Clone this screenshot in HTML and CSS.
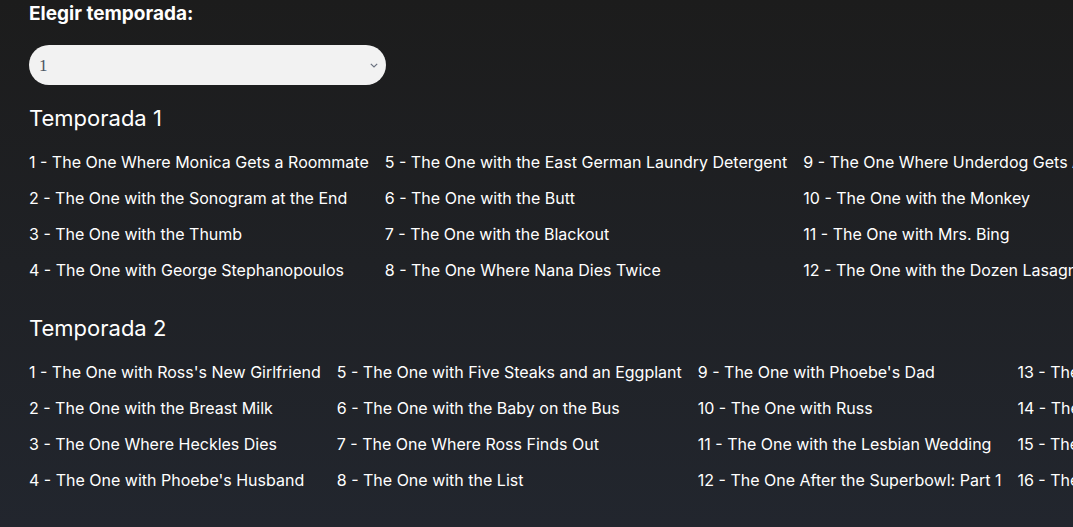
FILE: index.html
```html
<!DOCTYPE html>
<html lang="es">
<head>
<meta charset="utf-8">
<title>Temporadas</title>
<link rel="stylesheet" href="styles.css">
</head>
<body>
<main class="page">
  <label class="picker-label" for="season">Elegir temporada:</label>
  <div class="picker">
    <select id="season" class="picker-select">
      <option>1</option>
      <option>2</option>
    </select>
    <svg class="picker-chevron" width="8" height="5" viewBox="0 0 8 5"><path d="M0.8 0.8 L4 4 L7.2 0.8" fill="none" stroke="#6b7280" stroke-width="1.2"/></svg>
  </div>

  <section class="season">
    <h2 class="season-title">Temporada 1</h2>
    <ul class="episodes">
      <li>1 - The One Where Monica Gets a Roommate</li>
      <li>2 - The One with the Sonogram at the End</li>
      <li>3 - The One with the Thumb</li>
      <li>4 - The One with George Stephanopoulos</li>
      <li>5 - The One with the East German Laundry Detergent</li>
      <li>6 - The One with the Butt</li>
      <li>7 - The One with the Blackout</li>
      <li>8 - The One Where Nana Dies Twice</li>
      <li>9 - The One Where Underdog Gets Away</li>
      <li>10 - The One with the Monkey</li>
      <li>11 - The One with Mrs. Bing</li>
      <li>12 - The One with the Dozen Lasagnas</li>
      <li>13 - The One with the Boobies</li>
      <li>14 - The One with the Candy Hearts</li>
      <li>15 - The One with the Stoned Guy</li>
      <li>16 - The One with Two Parts: Part 1</li>
      <li>17 - The One with Two Parts: Part 2</li>
      <li>18 - The One with All the Poker</li>
      <li>19 - The One Where the Monkey Gets Away</li>
      <li>20 - The One with the Evil Orthodontist</li>
      <li>21 - The One with the Fake Monica</li>
      <li>22 - The One with the Ick Factor</li>
      <li>23 - The One with the Birth</li>
      <li>24 - The One Where Rachel Finds Out</li>
    </ul>
  </section>

  <section class="season">
    <h2 class="season-title">Temporada 2</h2>
    <ul class="episodes">
      <li>1 - The One with Ross's New Girlfriend</li>
      <li>2 - The One with the Breast Milk</li>
      <li>3 - The One Where Heckles Dies</li>
      <li>4 - The One with Phoebe's Husband</li>
      <li>5 - The One with Five Steaks and an Eggplant</li>
      <li>6 - The One with the Baby on the Bus</li>
      <li>7 - The One Where Ross Finds Out</li>
      <li>8 - The One with the List</li>
      <li>9 - The One with Phoebe's Dad</li>
      <li>10 - The One with Russ</li>
      <li>11 - The One with the Lesbian Wedding</li>
      <li>12 - The One After the Superbowl: Part 1</li>
      <li>13 - The One After the Superbowl: Part 2</li>
      <li>14 - The One with the Prom Video</li>
      <li>15 - The One Where Ross and Rachel... You Know</li>
      <li>16 - The One Where Joey Moves Out</li>
      <li>17 - The One Where Eddie Moves In</li>
      <li>18 - The One Where Dr. Ramoray Dies</li>
      <li>19 - The One Where Eddie Won't Go</li>
      <li>20 - The One Where Old Yeller Dies</li>
      <li>21 - The One with the Bullies</li>
      <li>22 - The One with the Two Parties</li>
      <li>23 - The One with the Chicken Pox</li>
      <li>24 - The One with Barry and Mindy's Wedding</li>
    </ul>
  </section>
</main>
</body>
</html>
```

FILE: styles.css
```css
html {
  overflow: hidden;
  height: 100%;
}

body {
  margin: 0;
  min-height: 100%;
  background: linear-gradient(180deg, #1c1c1c 0%, #22262e 100%);
  color: #ffffff;
  font-family: Inter, "Noto Sans", sans-serif;
}

.page {
  padding: 3px 29px 0;
}

.picker-label {
  display: block;
  font-size: 19px;
  font-weight: 700;
  line-height: 22px;
}

.picker {
  position: relative;
  width: 357px;
  margin-top: 20px;
}

.picker-select {
  display: block;
  width: 100%;
  height: 40px;
  border: none;
  border-radius: 20px;
  background: #f2f2f2;
  padding: 0 10px;
  font-family: "Liberation Serif", serif;
  font-size: 17px;
  color: #4b5563;
  appearance: none;
  -webkit-appearance: none;
  outline: none;
}

.picker-chevron {
  position: absolute;
  right: 8px;
  top: 18px;
}

.season {
  margin-bottom: 33px;
}

.season-title {
  margin: 20px 0 19px;
  font-size: 22px;
  font-weight: 400;
  line-height: 26px;
}

.episodes {
  list-style: none;
  margin: 0;
  padding: 0;
  display: grid;
  grid-template-rows: repeat(4, 24px);
  grid-auto-flow: column;
  grid-auto-columns: max-content;
  column-gap: 16px;
  row-gap: 12px;
  font-size: 16px;
  line-height: 24px;
  white-space: nowrap;
}
```
